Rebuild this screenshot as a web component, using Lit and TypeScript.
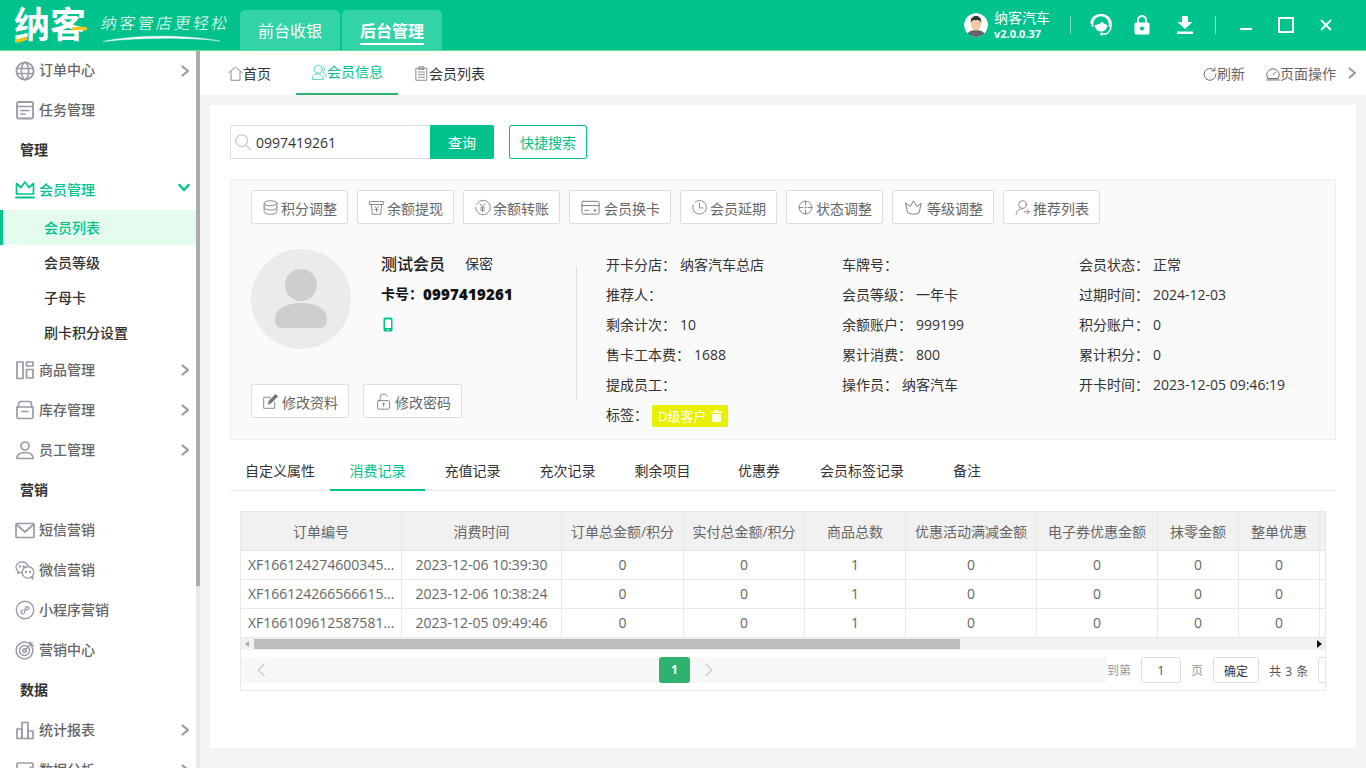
import { LitElement, html, css, svg } from "lit";
import { customElement } from "lit/decorators.js";

const ic = (body: unknown, cls = "ic", vb = "0 0 20 20") =>
  html`<svg class=${cls} viewBox=${vb} fill="none" stroke="currentColor" stroke-width="1.4" stroke-linecap="round" stroke-linejoin="round">${body}</svg>`;

const sideIcons: Record<string, unknown> = {
  globe: svg`<circle cx="10" cy="10" r="8.6" stroke-width="1.8"/><ellipse cx="10" cy="10" rx="3.6" ry="8.6" stroke-width="1.6"/><path d="M1.5 7.5h17M1.5 12.5h17" stroke-width="1.6"/>`,
  task: svg`<rect x="2" y="2" width="16" height="16.5" rx="1.5" stroke-width="1.8"/><path d="M2 6.5h16M6 10.5h8M6 14h4" stroke-width="1.7"/>`,
  crown: svg`<path d="M1.5 14V3.5l4.5 4L10 2l4 5.500 4.500-4V14z" stroke-width="1.7"/><path d="M1 17.500h18" stroke-width="2"/>`,
  goods: svg`<rect x="2" y="2" width="6" height="16.500" stroke-width="1.700"/><rect x="11.500" y="2" width="6.500" height="4" stroke-width="1.700"/><rect x="11.500" y="9.500" width="6.500" height="8.500" stroke-width="1.700"/>`,
  store: svg`<path d="M3.500 7V4a2.500 2.500 0 0 1 2.500-2.500h8A2.500 2.500 0 0 1 16.500 4v3" stroke-width="1.700"/><path d="M2 7h16v10a1.500 1.500 0 0 1-1.500 1.500h-13A1.500 1.500 0 0 1 2 17zM7 11.500h6" stroke-width="1.700"/>`,
  staff: svg`<circle cx="10" cy="6" r="4" stroke-width="1.700"/><path d="M2 18.500c0-4 3-6 8-6s8 2 8 6z" stroke-width="1.700"/>`,
  mail: svg`<rect x="1" y="3.500" width="18" height="14" rx="1" stroke-width="1.700"/><path d="M1.500 4.500 10 12l8.500-7.500" stroke-width="1.700"/>`,
  wechat: svg`<path d="M13 6.500C12.500 3.800 10 2 7 2 3.500 2 1 4.400 1 7.300c0 1.700.8 3.100 2.200 4.100l-.5 2 2.300-1.100c.6.200 1.200.3 1.800.3" stroke-width="1.300"/><circle cx="13" cy="12.300" r="5.800" stroke-width="1.300"/><path d="m15.500 17 2.500 2-.4-3" stroke-width="1.300"/><circle cx="11" cy="12" r=".5"/><circle cx="15" cy="12" r=".5"/><circle cx="5" cy="6.500" r=".5"/><circle cx="8.500" cy="6.500" r=".5"/>`,
  mini: svg`<circle cx="10" cy="10" r="8.700" stroke-width="1.400"/><path d="M6 12.500c0 1.400 2.500 2 3.300.5l1.400-5.500c.6-1.500 3.300-1 3.300.5s-1.600 2-2.800 1.600M8 10.200c-1.200-.3-2 .9-2 2.300" stroke-width="1.300"/>`,
  target: svg`<circle cx="9.500" cy="10.500" r="8.400" stroke-width="1.500"/><circle cx="9.500" cy="10.500" r="5" stroke-width="1.500"/><circle cx="9.500" cy="10.500" r="1.800" stroke-width="1.500"/><path d="m10 10 7-7M15 2l.5 3 3 .5" stroke-width="1.400"/>`,
  chart: svg`<rect x="2" y="9" width="5" height="9.500" stroke-width="1.700"/><rect x="7" y="2.500" width="6" height="16" stroke-width="1.700"/><rect x="13" y="11" width="5" height="7.500" stroke-width="1.700"/>`,
  analy: svg`<rect x="2" y="3" width="16" height="15" rx="1" stroke-width="1.700"/><path d="m5 13 4-4 3 2 4-4" stroke-width="1.700"/>`,
};

type Side = { t: string; i?: string; k: "item" | "head" | "sub" | "open"; arrow?: boolean; active?: boolean };
const menu: Side[] = [
  { t: "订单中心", i: "globe", k: "item", arrow: true },
  { t: "任务管理", i: "task", k: "item" },
  { t: "管理", k: "head" },
  { t: "会员管理", i: "crown", k: "open" },
  { t: "会员列表", k: "sub", active: true },
  { t: "会员等级", k: "sub" },
  { t: "子母卡", k: "sub" },
  { t: "刷卡积分设置", k: "sub" },
  { t: "商品管理", i: "goods", k: "item", arrow: true },
  { t: "库存管理", i: "store", k: "item", arrow: true },
  { t: "员工管理", i: "staff", k: "item", arrow: true },
  { t: "营销", k: "head" },
  { t: "短信营销", i: "mail", k: "item" },
  { t: "微信营销", i: "wechat", k: "item" },
  { t: "小程序营销", i: "mini", k: "item" },
  { t: "营销中心", i: "target", k: "item" },
  { t: "数据", k: "head" },
  { t: "统计报表", i: "chart", k: "item", arrow: true },
  { t: "数据分析", i: "analy", k: "item", arrow: true },
];

const actions: [string, unknown][] = [
  ["积分调整", svg`<ellipse cx="10" cy="5" rx="7.500" ry="3"/><path d="M2.500 5v10c0 1.700 3.400 3 7.500 3s7.500-1.300 7.500-3V5M2.500 10c0 1.700 3.400 3 7.500 3s7.500-1.300 7.500-3"/>`],
  ["余额提现", svg`<path d="M2 3h16v3.500H2zM4 6.500 5 18h10l1-11.500M8 9l2 2 2-2M10 11v4M8 12.500h4"/>`],
  ["余额转账", svg`<path d="M3 6a8.500 8.500 0 1 1-1 4"/><path d="m7 5.500 3 4 3-4M10 9.500V15M7.500 10.500h5M7.500 13h5"/>`],
  ["会员换卡", svg`<rect x="1" y="3.500" width="18" height="13.500" rx="1.500"/><path d="M1 8h18M4 13h4"/><circle cx="14.500" cy="13" r="1"/>`],
  ["会员延期", svg`<path d="M5 3.500A8 8 0 1 1 2.500 7"/><path d="M10 5v5.500h4"/>`],
  ["状态调整", svg`<circle cx="10" cy="10" r="7.500"/><path d="M10 2.500V7M10 13v4.500M2.500 10H7M13 10h4.500"/><circle cx="10" cy="10" r=".6"/>`],
  ["等级调整", svg`<path d="M2 5.500l4.500 3.500L10 3l3.500 6L18 5.500 16 15.500c-3 2-9 2-12 0z"/>`],
  ["推荐列表", svg`<circle cx="10" cy="6.500" r="4.500"/><path d="M2.500 18c0-4 2.500-6.500 7.500-6.500M12 15h6M15.500 12.500 18 15l-2.500 2.500"/>`],
];

const info: [string, string][] = [
  ["开卡分店：", "纳客汽车总店"], ["车牌号：", ""], ["会员状态：", "正常"],
  ["推荐人：", ""], ["会员等级：", "一年卡"], ["过期时间：", "2024-12-03"],
  ["剩余计次：", "10"], ["余额账户：", "999199"], ["积分账户：", "0"],
  ["售卡工本费：", "1688"], ["累计消费：", "800"], ["累计积分：", "0"],
  ["提成员工：", ""], ["操作员：", "纳客汽车"], ["开卡时间：", "2023-12-05 09:46:19"],
];

const tabs = ["自定义属性", "消费记录", "充值记录", "充次记录", "剩余项目", "优惠券", "会员标签记录", "备注"];
const heads = ["订单编号", "消费时间", "订单总金额/积分", "实付总金额/积分", "商品总数", "优惠活动满减金额", "电子券优惠金额", "抹零金额", "整单优惠", ""];
const rows = [
  ["XF166124274600345...", "2023-12-06 10:39:30", "0", "0", "1", "0", "0", "0", "0", ""],
  ["XF166124266566615...", "2023-12-06 10:38:24", "0", "0", "1", "0", "0", "0", "0", ""],
  ["XF166109612587581...", "2023-12-05 09:49:46", "0", "0", "1", "0", "0", "0", "0", ""],
];

@customElement("app-root")
export class AppRoot extends LitElement {
  static styles = css`
    :host { display: block; width: 1366px; height: 768px; overflow: hidden; background: #f4f4f4;
      font-family: "Open Sans", "Noto Sans CJK SC", sans-serif; font-size: 14px; line-height: 20px; color: #333; }
    * { box-sizing: border-box; }
    svg { display: block; flex: none; }

    .top { height: 51px; background: #00c28c; border-bottom: 1px solid #5ce38f; display: flex; align-items: flex-end; color: #fff; }
    .logo { position: relative; width: 240px; height: 50px; flex: none; }
    .logo-main { position: absolute; left: 14px; top: 0; font-size: 36px; line-height: 50px; font-weight: 700; letter-spacing: 0; }
    .logo-y { position: absolute; left: 14px; top: 0; }
    .logo-tag { position: absolute; left: 101px; top: 11px; font-size: 16px; line-height: 24px; letter-spacing: 2.400px; font-weight: 300; transform: skewX(-10deg); white-space: nowrap; }
    .logo-sw { position: absolute; left: 102px; top: 34px; }
    .systab { width: 100px; height: 40px; margin-right: 2px; background: #33d3a8; border-radius: 5px 5px 0 0; display: flex; justify-content: center; align-items: center; font-size: 16px; }
    .systab span { line-height: 24px; padding-top: 1px; }
    .systab.on span { font-weight: 700; border-bottom: 2px solid #fff; line-height: 23px; padding: 2px 0 0; margin-top: 2px; }
    .top-right { margin-left: auto; height: 50px; display: flex; align-items: center; }
    .ava { width: 24px; height: 24px; border-radius: 50%; margin-right: 6px; }
    .uname { width: 76px; display: flex; flex-direction: column; }
    .uname b { font-weight: 400; font-size: 14px; line-height: 17px; }
    .uname i { font-style: normal; font-weight: 700; font-size: 11px; line-height: 14px; margin-top: 1px; }
    .tdiv { width: 1px; height: 18px; background: #7fe0c6; }
    .tdiv.d2 { margin-left: 9px; }
    .tbtn { width: 43px; display: flex; justify-content: center; }
    .tbtn.hs { width: 41px; margin-left: 8px; padding-left: 2px; }
    .winbtn { width: 40px; display: flex; justify-content: center; }
    .winbtn.first { margin-left: 10px; }
    .winbtn.last { margin-right: 20px; }

    .body { display: flex; height: 717px; }
    .side { width: 200px; flex: none; display: flex; background: #e8e8e8; overflow: hidden; }
    .side-list { width: 196px; background: #fff; height: 717px; overflow: hidden; }
    .thumb { width: 4px; height: 535px; background: #ababab; }
    .row { height: 40px; display: flex; align-items: center; padding: 0 6px 0 15px; color: #666; font-weight: 500; }
    .row:first-child { height: 39px; }
    .row:first-child span { margin-bottom: 2px; }
    .row .ic { width: 20px; height: 20px; color: #9a9aa6; margin-right: 4px; }
    .row .chev { margin-left: auto; width: 10px; height: 12px; color: #9a9aa6; }
    .row.open { color: #00c28c; }
    .row.open .ic { color: #00c28c; }
    .row.open .chev { color: #00c28c; width: 12px; height: 10px; margin-top: -4px; margin-right: 0; }
    .head { height: 40px; line-height: 40px; padding-left: 20px; font-weight: 700; color: #333; }
    .sub { height: 35px; line-height: 35px; padding-left: 44px; color: #333; font-weight: 500; }
    .sub.on { background: #e3fcee; color: #00c28c; border-left: 3px solid #00c28c; padding-left: 41px; }

    .main { flex: 1; min-width: 0; }
    .tabbar { height: 44px; background: #fff; display: flex; align-items: stretch; padding-left: 13px; }
    .pt { display: flex; align-items: center; padding: 1px 15px 0; color: #333; height: 44px; margin-right: 10px; }
    .pt .ic { width: 15px; height: 15px; color: #666; stroke-width: 1; margin-top: -1px; }
    .pt.on { color: #00c28c; border-bottom: 2px solid #2fb26e; padding: 0 15px; width: 102px; margin-right: 1px; }
    .pt.on .ic { color: #33d3a8; width: 16px; height: 16px; }
    .tools { margin-left: auto; display: flex; align-items: center; color: #666; padding-top: 1px; }
    .tools .ic { width: 14px; height: 14px; }
    .tool { display: flex; align-items: center; margin-right: 21px; }
    .tool.l { margin-right: 0; }
    .tools .chev { width: 10px; height: 12px; color: #9a9aa6; margin: -1px 9px 0 11px; }

    .card { margin: 10px; height: 643px; background: #fff; padding: 20px; }
    .search { display: flex; height: 34px; }
    .inp { width: 200px; border: 1px solid #ddd; border-right: 0; border-radius: 2px 0 0 2px; display: flex; align-items: center; padding: 1px 0 0 3px; color: #333; }
    .inp .ic { width: 18px; height: 18px; color: #ccc; margin: -1px 4px 0 0; stroke-width: 1.500; }
    .qbtn { width: 64px; background: #00c28c; color: #fff; border-radius: 0 2px 2px 0; display: flex; align-items: center; justify-content: center; padding-top: 1px; }
    .qs { width: 78px; margin-left: 15px; border: 1px solid #00c28c; color: #00c28c; border-radius: 2px; display: flex; align-items: center; justify-content: center; padding-top: 2px; }

    .panel { margin-top: 20px; height: 261px; background: #fafafa; border: 1px solid #eee; padding: 10px 20px 0; }
    .acts { display: grid; grid-template-columns: 97px 97px 97px 102px 97px 97px 102px 97px; gap: 9px; }
    .btn { height: 34px; background: #fff; border: 1px solid #ddd; border-radius: 2px; display: inline-flex; align-items: center; padding: 3px 0 0 10px; color: #666; white-space: nowrap; }
    .btn .ic { width: 17px; height: 17px; color: #777; margin: -3px 2px 0 0; stroke-width: 1; }
    .btn.w { padding-left: 11px; }
    .btn.w .ic { width: 19px; height: 19px; margin-right: 4px; }
    .profile { display: flex; margin-top: 25px; }
    .pleft { width: 325px; flex: none; }
    .ptop { display: flex; height: 100px; }
    .avatar { width: 100px; height: 100px; border-radius: 50%; background: #ebebeb; display: flex; align-items: center; justify-content: center; }
    .who { margin-left: 30px; }
    .who > div { height: 30px; display: flex; align-items: center; color: #333; }
    .who .nameline { padding-bottom: 1px; }
    .who .nm { font-size: 16px; font-weight: 500; color: #222; }
    .who .sx { margin: 1px 0 0 20px; font-size: 14px; }
    .who .card-no { font-weight: 700; color: #111; padding-bottom: 1px; }
    .who .card-no b { font-size: 15px; letter-spacing: .2px; }
    .who .ph { color: #00c28c; padding-left: 2px; }
    .pbtns { margin-top: 35px; display: flex; gap: 14px; }
    .pbtns .btn { width: 98px; }
    .pbtns .btn .ic { margin-right: 3px; }
    .pbtns .btn + .btn { width: 99px; padding-left: 11px; }
    .vline { width: 1px; height: 135px; background: #ddd; margin-top: 17px; flex: none; }
    .info { margin: 1px 0 0 29px; display: grid; grid-template-columns: 236px 237px 230px; grid-auto-rows: 30px; align-items: center; color: #333; }
    .info span { margin-left: 4px; }
    .tag { display: inline-flex; align-items: center; height: 22px; width: 76px; margin: 2px 0 0 4px; background: #e8f000; color: #fff; border-radius: 2px; padding-left: 6px; font-size: 13px; white-space: nowrap; }
    .tag svg { margin-left: 5px; width: 11px; height: 12px; }
    .tagrow { display: flex; align-items: center; }

    .tabs { margin-top: 11px; height: 40px; border-bottom: 1px solid #e5e5e5; display: grid; grid-template-columns: 100px 95px 95px 95px 95px 98px 108px 102px; justify-content: start; }
    .tab { height: 40px; line-height: 39px; text-align: center; color: #333; }
    .tab.on { color: #00c28c; border-bottom: 2px solid #00c28c; }

    .tbl { margin: 20px 10px 0; height: 180px; border: 1px solid #e8e8e8; overflow: hidden; }
    .grid { display: grid; grid-template-columns: 161px 160px 122px 121px 101px 131px 121px 81px 81px 6px; width: 1085px; }
    .c { height: 29px; line-height: 27px; text-align: center; color: #666; border-right: 1px solid #e8e8e8; border-bottom: 1px solid #e8e8e8; white-space: nowrap; overflow: hidden; }
    .c.h { height: 39px; line-height: 40px; background: #f1f1f1; }
    .c.id { text-align: left; padding-left: 7px; }
    .c:nth-child(10n) { border-right: 0; }
    .sb { height: 12px; background: #f1f1f1; display: flex; align-items: center; position: relative; }
    .sbth { width: 706px; height: 10px; margin-left: 13px; background: #bdbdbd; }
    .sb .al { margin-left: 4px; width: 0; height: 0; border: 3px solid transparent; border-right: 4px solid #aaa; border-left: 0; position: absolute; left: 0; }
    .sb .ar { width: 0; height: 0; border: 4px solid transparent; border-left: 5px solid #111; border-right: 0; position: absolute; right: 3px; }
    .pg { margin-top: 7px; height: 26px; display: flex; align-items: center; width: 1200px; color: #666; font-size: 12px; white-space: nowrap; }
    .pgl { width: 866px; height: 26px; background: #f7f7f7; border-radius: 0 3px 3px 0; display: flex; align-items: center; flex: none; }
    .pgl .pv { margin-left: 15px; width: 10px; height: 14px; color: #ccc; }
    .pgl .nx { margin-left: 14px; width: 10px; height: 14px; color: #ccc; }
    .cur { margin-left: 393px; width: 31px; height: 26px; border-radius: 3px; background: #2fb26e; color: #fff; display: flex; align-items: center; justify-content: center; font-weight: 700; }
    .pgt { color: #999; flex: none; padding-top: 2px; }
    .pgi { width: 40px; height: 26px; flex: none; margin: 0 10px; border: 1px solid #ddd; border-radius: 3px; display: flex; align-items: center; justify-content: center; color: #555; font-size: 13px; }
    .ok { width: 46px; height: 26px; flex: none; margin: 0 10px; border: 1px solid #ddd; border-radius: 3px; display: flex; align-items: center; justify-content: center; color: #333; padding-top: 4px; }
    .tot { color: #555; flex: none; padding-top: 3px; word-spacing: 1px; }
    .sz { width: 30px; height: 26px; margin-left: 10px; border: 1px solid #ddd; border-radius: 3px; flex: none; }
  `;

  private chevR() {
    return ic(svg`<path d="M2.500 1.500 8 6l-5.500 4.500" stroke-width="2.200"/>`, "chev", "0 0 10 12");
  }

  private sideRow(m: Side) {
    if (m.k === "head") return html`<div class="head">${m.t}</div>`;
    if (m.k === "sub") return html`<div class="sub ${m.active ? "on" : ""}">${m.t}</div>`;
    return html`<div class="row ${m.k === "open" ? "open" : ""}">
      ${ic(sideIcons[m.i as string])}<span>${m.t}</span>
      ${m.k === "open" ? ic(svg`<path d="M1.500 2 6 7l4.500-5" stroke-width="2.400"/>`, "chev", "0 0 12 10") : m.arrow ? this.chevR() : ""}
    </div>`;
  }

  render() {
    return html`
      <div class="top">
        <div class="logo">
          <div class="logo-main">纳客</div>
          <svg class="logo-y" width="90" height="50" viewBox="0 0 90 50" fill="none"><path d="M1 41c4 0 8-1 12-3" stroke="#f5c518" stroke-width="3.500"/><path d="M58 29c7-1 12-1 15 0" stroke="#f5c518" stroke-width="3"/></svg>
          <div class="logo-tag">纳客管店更轻松</div>
          <svg class="logo-sw" width="120" height="9" viewBox="0 0 120 9" fill="none"><path d="M1 7.500C30 1 80 0 118 7 85 3 40 3.500 1 7.500z" fill="#fff" stroke="#fff" stroke-width=".4"/></svg>
        </div>
        <div class="systab"><span>前台收银</span></div>
        <div class="systab on"><span>后台管理</span></div>
        <div class="top-right">
          <svg class="ava" viewBox="0 0 24 24"><circle cx="12" cy="12" r="12" fill="#fff"/><path d="M3.500 20.500c2-3 5-3.500 8.500-3.500s6.500.5 8.500 3.500A12 12 0 0 1 12 24a12 12 0 0 1-8.500-3.500z" fill="#666"/><ellipse cx="12" cy="11" rx="5" ry="6.500" fill="#f4c6a4"/><path d="M6.800 10c-.5-5 2-7 5.200-7s5.700 2 5.200 7c-1-2.500-2-3-5.200-3s-4.200.5-5.200 3z" fill="#333"/></svg>
          <div class="uname"><b>纳客汽车</b><i>v2.0.0.37</i></div>
          <div class="tdiv"></div>
          <div class="tbtn hs"><svg width="22" height="22" viewBox="0 0 22 22" fill="none"><path d="M2.500 13V10a8.500 8.500 0 0 1 17 0v3" stroke="#fff" stroke-width="1.600"/><path d="M1 9.500c0-5 4.500-9 10-9s10 4 10 9v2a9.500 9.500 0 0 1-5 8.500H12" stroke="#fff" stroke-width="1.400"/><path d="M4.500 11c3 0 6-1 7.500-3.500 1.500 2 3 3 5.500 3.500-.5 4-3 6.500-6.500 6.500S5 15 4.500 11z" fill="#fff"/><circle cx="11.500" cy="20" r="1.400" fill="#fff"/></svg></div>
          <div class="tbtn"><svg width="16" height="20" viewBox="0 0 16 20"><path d="M4 8V5a4 4 0 0 1 8 0v3" fill="none" stroke="#fff" stroke-width="2"/><rect x="0.500" y="7.500" width="15" height="12" rx="1.500" fill="#fff"/><circle cx="8" cy="13.500" r="2" fill="#00c28c"/></svg></div>
          <div class="tbtn"><svg width="18" height="20" viewBox="0 0 18 20" fill="#fff"><path d="M6 1h6v6h4.500L9 14 1.500 7H6z"/><rect x="1" y="16.500" width="16" height="2.500"/></svg></div>
          <div class="tdiv d2"></div>
          <div class="winbtn first"><svg width="12" height="12" viewBox="0 0 12 12"><path d="M0 10h12" stroke="#fff" stroke-width="2"/></svg></div>
          <div class="winbtn"><svg width="16" height="16" viewBox="0 0 16 16" fill="none"><rect x="1" y="1" width="14" height="14" stroke="#fff" stroke-width="2"/></svg></div>
          <div class="winbtn last"><svg width="12" height="12" viewBox="0 0 12 12" fill="none"><path d="m1 1 10 10M11 1 1 11" stroke="#fff" stroke-width="1.800"/></svg></div>
        </div>
      </div>
      <div class="body">
        <div class="side">
          <div class="side-list">${menu.map((m) => this.sideRow(m))}</div>
          <div class="thumb"></div>
        </div>
        <div class="main">
          <div class="tabbar">
            <div class="pt">${ic(svg`<path d="M1 9 10 1.500 19 9M4 7.500V19h12V7.500"/>`)}首页</div>
            <div class="pt on">${ic(svg`<circle cx="9" cy="6.500" r="5"/><path d="M1.500 19c0-4 2.500-6 5-6.500h4c2.500.5 5 2.500 5 6.500zM14 2c3 1 4 6 1 8 2 1 4 3 4 6"/>`)}<span>会员信息</span></div>
            <div class="pt">${ic(svg`<path d="M3 3h14v16H3zM7 1h6v3.500H7zM6 8h8M6 11.500h8M6 15h8"/>`)}会员列表</div>
            <div class="tools">
              <div class="tool">${ic(svg`<path d="M16.500 5A8.500 8.500 0 1 0 18.500 10M17 1v4.500h-4.500"/>`)}刷新</div>
              <div class="tool l">${ic(svg`<path d="M2.500 16a8.700 8.700 0 1 1 15 0zM10 11l3.500-3.500"/><path d="M1 18.500h18"/>`)}页面操作</div>
              ${this.chevR()}
            </div>
          </div>
          <div class="card">
            <div class="search">
              <div class="inp">${ic(svg`<circle cx="8.500" cy="8.500" r="6.500"/><path d="m13.500 13.500 5 5"/>`)}0997419261</div>
              <div class="qbtn">查询</div>
              <div class="qs">快捷搜索</div>
            </div>
            <div class="panel">
              <div class="acts">
                ${actions.map(([t, p]) => html`<div class="btn ${t === "会员换卡" || t === "等级调整" ? "w" : ""}">${ic(p)}${t}</div>`)}
              </div>
              <div class="profile">
                <div class="pleft">
                  <div class="ptop">
                    <div class="avatar"><svg width="52" height="60" viewBox="0 0 52 60" fill="#cecece"><circle cx="26" cy="16" r="16"/><path d="M0 50c0-9 10-16 26-16s26 7 26 16c0 6-2 9-8 9H8c-6 0-8-3-8-9z"/></svg></div>
                    <div class="who">
                      <div class="nameline"><span class="nm">测试会员</span><span class="sx">保密</span></div>
                      <div class="card-no">卡号：<b>0997419261</b></div>
                      <div class="ph"><svg width="10" height="15" viewBox="0 0 10 15"><rect x=".5" y=".5" width="9" height="14" rx="1.500" fill="currentColor"/><rect x="2" y="2.500" width="6" height="8.500" fill="#fff"/><circle cx="5" cy="12.700" r=".8" fill="#fff"/></svg></div>
                    </div>
                  </div>
                  <div class="pbtns">
                    <div class="btn">${ic(svg`<path d="M15 10.500V18H2V5h8"/><path d="M7.500 13l1-4L16 1.500l2.500 2.500L11 11.500z" fill="currentColor"/>`)}修改资料</div>
                    <div class="btn">${ic(svg`<path d="M6 9V5.500a4.500 4.500 0 0 1 8.500-2"/><rect x="3" y="9" width="14" height="10" rx="1"/><path d="M10 13v2.500"/><circle cx="10" cy="12.800" r=".8"/>`)}修改密码</div>
                  </div>
                </div>
                <div class="vline"></div>
                <div class="info">
                  ${info.map(([k, v]) => html`<div>${k}<span>${v}</span></div>`)}
                  <div class="tagrow">标签：<div class="tag">D级客户<svg viewBox="0 0 11 12" fill="#fff"><path d="M0 1.500h11V3H0zM3.500 0h4v1.500h-4zM1 4h9v8H1z" opacity=".9"/></svg></div></div>
                </div>
              </div>
            </div>
            <div class="tabs">
              ${tabs.map((t) => html`<div class="tab ${t === "消费记录" ? "on" : ""}">${t}</div>`)}
            </div>
            <div class="tbl">
              <div class="grid">
                ${heads.map((h) => html`<div class="c h">${h}</div>`)}
                ${rows.map((r) => r.map((c, i) => html`<div class="c ${i === 0 ? "id" : ""}">${c}</div>`))}
              </div>
              <div class="sb"><i class="al"></i><div class="sbth"></div><i class="ar"></i></div>
              <div class="pg">
                <div class="pgl">
                  ${ic(svg`<path d="M8 1.500 2 7l6 5.500"/>`, "pv", "0 0 10 14")}
                  <div class="cur">1</div>
                  ${ic(svg`<path d="M2 1.500 8 7l-6 5.500"/>`, "nx", "0 0 10 14")}
                </div>
                <span class="pgt">到第</span>
                <div class="pgi">1</div>
                <span class="pgt">页</span>
                <div class="ok">确定</div>
                <span class="tot">共 3 条</span>
                <div class="sz"></div>
              </div>
            </div>
          </div>
        </div>
      </div>
    `;
  }
}
